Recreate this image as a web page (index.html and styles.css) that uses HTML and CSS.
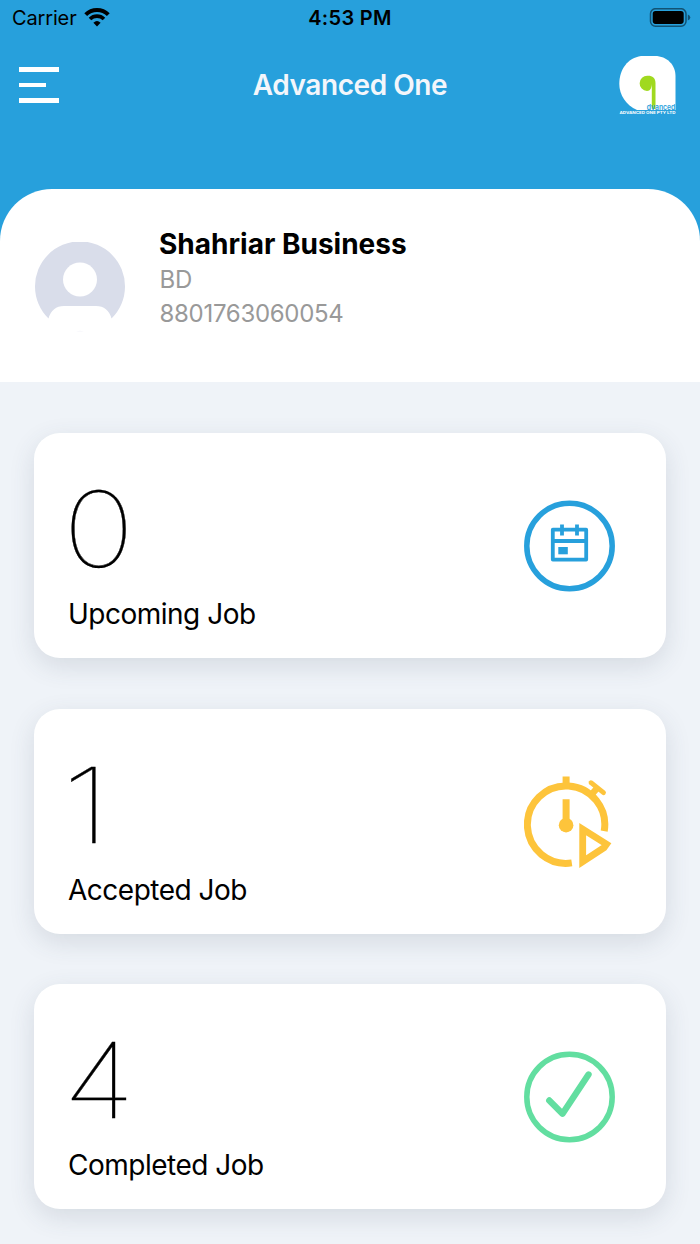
FILE: index.html
```html
<!DOCTYPE html>
<html lang="en">
<head>
    <meta charset="UTF-8">
    <meta name="viewport" content="width=device-width, initial-scale=1.0">
    <title>Advanced One</title>
    <link rel="stylesheet" href="styles.css">
</head>
<body>

<header class="header">
    <div class="status-bar">
        <div class="carrier">
            <span>Carrier</span>
            <svg class="wifi" viewBox="0 0 26 20" width="26" height="20">
                <path d="M1.700 6.700a16 16 0 0 1 22.600 0" fill="none" stroke="#000" stroke-width="4"/>
                <path d="M6 11a10 10 0 0 1 14 0" fill="none" stroke="#000" stroke-width="3.600"/>
                <path d="M9.400 14.700a5.400 5.400 0 0 1 7.200 0L13 18.600z" fill="#000"/>
            </svg>
        </div>
        <span class="time">4:53 PM</span>
        <svg class="battery" viewBox="0 0 42 20" width="42" height="20">
            <rect x="1.500" y="0.700" width="35.500" height="17.500" rx="5" fill="none" stroke="#125273" stroke-width="1.500"/>
            <rect x="3.700" y="2.900" width="31" height="13" rx="2.800" fill="#000"/>
            <path d="M38.800 6.500q2.500 1 2.500 3t-2.500 3z" fill="#125273"/>
        </svg>
    </div>
    <div class="nav">
        <button class="menu-button" aria-label="Menu">
            <span class="line"></span>
            <span class="line short"></span>
            <span class="line"></span>
        </button>
        <h1 class="title">Advanced One</h1>
        <svg class="logo" viewBox="0 0 58 60" width="58" height="60">
            <path d="M23 1H37C49 1 57.500 10 57.500 21V55H19C8 50 1.300 40 1.300 29 1.300 14 10 3 23 1z" fill="#fff"/>
            <path d="M29.500 20.800C34 20.500 37.500 23 37.500 28V54h-3.700V29C33.500 33 32.500 36 29 36a7.500 7.500 0 0 1 .5-15.200z" fill="#a0d91f"/>
            <text x="28.800" y="54.500" class="logo-name" textLength="28.500" lengthAdjust="spacingAndGlyphs">dvanced</text>
            <text x="1.500" y="58.500" class="logo-company" textLength="56" lengthAdjust="spacingAndGlyphs">ADVANCED ONE PTY LTD</text>
        </svg>
    </div>
</header>

<section class="profile">
    <svg class="avatar" viewBox="0 0 90 90" width="90" height="90">
        <path d="M13.500 76.500A45 45 0 1 1 76.500 76.500Q73 64 61 64H29Q17 64 13.500 76.500z" fill="#d9ddea"/>
        <circle cx="45" cy="37.500" r="17" fill="#fff"/>
        <path d="M41 89.500q4-1.500 8 0z" fill="#f3f4f9"/>
    </svg>
    <div class="profile-info">
        <h2 class="name">Shahriar Business</h2>
        <p class="country">BD</p>
        <p class="phone">8801763060054</p>
    </div>
</section>

<main class="jobs">
    <div class="card">
        <div class="card-text">
            <p class="count">0</p>
            <p class="label">Upcoming Job</p>
        </div>
        <svg class="icon" viewBox="0 0 92 92" width="92" height="92">
            <circle cx="45.500" cy="46" r="42.700" fill="none" stroke="#27a0dc" stroke-width="5.500"/>
            <path d="M28.800 29.700h33.400v29.900H28.800zM27.500 41h36M38 24.500v11M53 24.500v11" fill="none" stroke="#27a0dc" stroke-width="3.800" stroke-linejoin="round"/>
            <rect x="34.300" y="47" width="9.500" height="7.300" fill="#27a0dc"/>
        </svg>
    </div>

    <div class="card">
        <div class="card-text">
            <p class="count one">1</p>
            <p class="label">Accepted Job</p>
        </div>
        <svg class="icon" viewBox="0 0 92 92" width="92" height="92">
            <g transform="translate(-0.5 -0.8)">
                <g fill="none" stroke="#fdc43b" stroke-width="7">
                    <path d="M48.300 87.700A38.700 38.700 0 1 1 80.700 56"/>
                    <path d="M42.600 1.200V12M42.600 24v24"/>
                    <path d="M68 19.500l6-7" stroke-width="6.500"/>
                    <path d="M67.500 7.500l12.500 10" stroke-width="4.800" stroke-linecap="round"/>
                    <path d="M59.200 54V86.500L80.500 72.500 83 69z" stroke-width="6.800"/>
                </g>
                <circle cx="42.600" cy="50" r="7.300" fill="#fdc43b"/>
            </g>
        </svg>
    </div>

    <div class="card">
        <div class="card-text">
            <p class="count">4</p>
            <p class="label">Completed Job</p>
        </div>
        <svg class="icon" viewBox="0 0 92 92" width="92" height="92">
            <circle cx="45.500" cy="46" r="42.700" fill="none" stroke="#62dea0" stroke-width="5.500"/>
            <path d="M25.300 49.500l13.200 13.200L64.500 23.500" fill="none" stroke="#62dea0" stroke-width="6.400" stroke-linecap="round" stroke-linejoin="round"/>
        </svg>
    </div>
</main>

</body>
</html>
```
FILE: styles.css
```css
* {
    box-sizing: border-box;
}
body {
    margin: 0;
    height: 1244px;
    overflow: hidden;
    background-color: #eff3f8;
    font-family: Inter, "Liberation Sans", sans-serif;
    color: #000;
}
h1, h2, p {
    margin: 0;
}
.header {
    height: 242px;
    background-color: #27a0dc;
}
.status-bar {
    display: grid;
    grid-template-columns: 1fr auto 1fr;
    align-items: center;
    height: 36px;
    padding: 0 9px;
    font-size: 20px;
}
.carrier {
    display: flex;
    align-items: center;
    gap: 7px;
    padding-left: 3px;
    letter-spacing: -0.15px;
}
.time {
    font-weight: 600;
    letter-spacing: 0.3px;
}
.battery {
    justify-self: end;
}
.nav {
    display: grid;
    grid-template-columns: 1fr auto 1fr;
    align-items: center;
    height: 98px;
    padding: 0 24px 0 19px;
}
.menu-button {
    display: flex;
    flex-direction: column;
    gap: 11px;
    padding: 0;
    border: none;
    background: none;
    cursor: pointer;
}
.line {
    width: 40px;
    height: 4.7px;
    background-color: #fff;
}
.line.short {
    width: 27px;
}
.title {
    padding-left: 5px;
    font-size: 28px;
    font-weight: 600;
    color: #f3f6fb;
    letter-spacing: -0.45px;
}
.logo {
    justify-self: end;
    overflow: visible;
}
.logo-name {
    font-size: 7.5px;
    font-weight: 600;
    fill: #27a0dc;
}
.logo-company {
    font-size: 4px;
    font-weight: 700;
    fill: #fff;
}
.profile {
    display: flex;
    gap: 34px;
    height: 193px;
    margin-top: -53px;
    padding: 38px 35px;
    border-radius: 52px 52px 0 0;
    background-color: #fff;
}
.avatar {
    margin-top: 14.5px;
}
.name {
    margin-bottom: 2px;
    font-size: 28px;
    font-weight: 700;
    line-height: 34px;
}
.country, .phone {
    padding-left: 0.5px;
    font-size: 24px;
    line-height: 34px;
    color: #999;
    letter-spacing: -0.3px;
}
.jobs {
    display: flex;
    flex-direction: column;
    gap: 50.5px;
    padding: 51px 34px 0;
}
.card {
    display: flex;
    justify-content: space-between;
    height: 225px;
    padding: 34px 50px 0 34px;
    border-radius: 26px;
    background-color: #fff;
    box-shadow: 0 8px 26px rgba(60, 70, 90, 0.14);
}
.count {
    margin-left: -5px;
    font-size: 105px;
    font-weight: 100;
    line-height: 124px;
    transform: scaleX(1.15);
    transform-origin: left;
    -webkit-text-stroke: 0.3px #000;
}
.count.one {
    margin-left: -6px;
    transform: scaleX(1.25);
}
.label {
    margin-top: 6px;
    font-size: 28px;
    line-height: 34px;
    letter-spacing: -0.5px;
}
.icon {
    margin-top: 33px;
}
```
